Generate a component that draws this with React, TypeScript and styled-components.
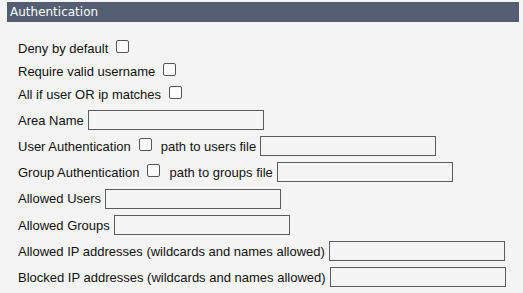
import React from "react";
import styled, { createGlobalStyle } from "styled-components";

const Global = createGlobalStyle`
  html, body { margin: 0; padding: 0; background: #f4f4f4; }
  body { font-family: "Liberation Sans", Arial, sans-serif; font-size: 13px; color: #111; }
`;

const Page = styled.div`
  padding: 2px 4px 0 7px;
`;

const Header = styled.div`
  background: #545e72;
  color: #fff;
  font-family: "DejaVu Sans", Verdana, sans-serif;
  font-size: 12px;
  height: 20px;
  line-height: 20px;
  padding-left: 3px;
  width: 509px;
`;

const Form = styled.div`
  display: flex;
  flex-direction: column;
  padding: 14px 0 0 11px;
`;

const Row = styled.div<{ $h: number; $mt?: number }>`
  display: flex;
  align-items: center;
  height: ${(p) => p.$h}px;
  margin-top: ${(p) => p.$mt ?? 0}px;
  white-space: nowrap;
`;

const Box = styled.span`
  display: inline-block;
  width: 11px;
  height: 11px;
  border: 1px solid #555;
  border-radius: 2px;
  background: #fbfbfb;
  margin: 0 9px 0 8px;
  position: relative;
  top: -2px;
`;

const Field = styled.span`
  display: inline-block;
  width: 174px;
  height: 18px;
  border: 1px solid #5a5a5a;
  background: #f4f4f4;
  margin-left: 4px;
`;

const Text = styled.span``;

export default function App() {
  return (
    <>
      <Global />
      <Page>
        <Header>Authentication</Header>
        <Form>
          <Row $h={24}><Text>Deny by default</Text><Box /></Row>
          <Row $h={23}><Text>Require valid username</Text><Box /></Row>
          <Row $h={22}><Text>All if user OR ip matches</Text><Box /></Row>
          <Row $h={26} $mt={2}><Text>Area Name</Text><Field /></Row>
          <Row $h={26}><Text>User Authentication</Text><Box /><Text>path to users file</Text><Field /></Row>
          <Row $h={26}><Text>Group Authentication</Text><Box /><Text>path to groups file</Text><Field /></Row>
          <Row $h={27}><Text>Allowed Users</Text><Field /></Row>
          <Row $h={26}><Text>Allowed Groups</Text><Field /></Row>
          <Row $h={26}><Text>Allowed IP addresses (wildcards and names allowed)</Text><Field /></Row>
          <Row $h={26}><Text>Blocked IP addresses (wildcards and names allowed)</Text><Field /></Row>
        </Form>
      </Page>
    </>
  );
}
